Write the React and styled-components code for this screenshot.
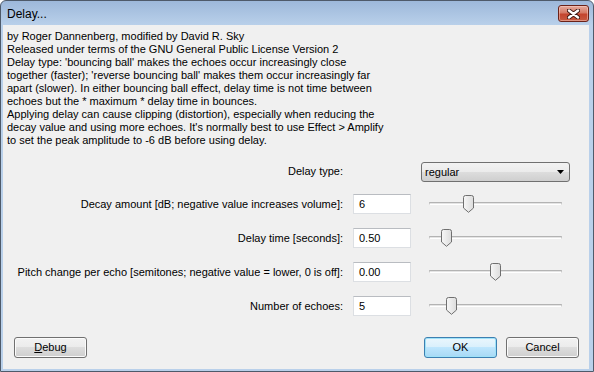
import React from "react";
import styled, { createGlobalStyle } from "styled-components";

const GlobalStyle = createGlobalStyle`
  html, body {
    margin: 0;
    padding: 0;
    background: #ffffff;
    overflow: hidden;
  }
  * {
    box-sizing: border-box;
  }
`;

const description = [
  "by Roger Dannenberg, modified by David R. Sky",
  "Released under terms of the GNU General Public License Version 2",
  "Delay type: 'bouncing ball' makes the echoes occur increasingly close",
  "together (faster); 'reverse bouncing ball' makes them occur increasingly far",
  "apart (slower). In either bouncing ball effect, delay time is not time between",
  "echoes but the * maximum * delay time in bounces.",
  "Applying delay can cause clipping (distortion), especially when reducing the",
  "decay value and using more echoes. It's normally best to use Effect > Amplify",
  "to set the peak amplitude to -6 dB before using delay.",
];

const params = [
  { label: "Decay amount [dB; negative value increases volume]:", value: "6", pos: 0.274 },
  { label: "Delay time [seconds]:", value: "0.50", pos: 0.1 },
  { label: "Pitch change per echo [semitones; negative value = lower, 0 is off]:", value: "0.00", pos: 0.5 },
  { label: "Number of echoes:", value: "5", pos: 0.138 },
];

const Window = styled.div`
  width: 594px;
  height: 372px;
  display: flex;
  flex-direction: column;
  border: 1px solid #4e5a6a;
  border-radius: 6px 6px 0 0;
  padding: 0 4px 2px 2px;
  background: linear-gradient(to bottom, #9db8da 0, #b9d0ea 24px, #b9d0ea 100%);
  font-family: "Liberation Sans", "DejaVu Sans", sans-serif;
  font-size: 11px;
  color: #000;
`;

const TitleBar = styled.div`
  height: 24px;
  flex: none;
  display: flex;
  align-items: flex-start;
  justify-content: space-between;
  padding: 0 0 0 4px;
`;

const Title = styled.div`
  font-size: 12px;
  line-height: 27px;
  color: #000;
`;

const CloseButton = styled.div`
  width: 31px;
  height: 17px;
  margin-top: 4px;
  border: 1px solid #6b2218;
  border-radius: 3px;
  background: linear-gradient(to bottom, #e6aa9c 0%, #d57a66 45%, #c4452f 55%, #c65a41 100%);
  box-shadow: inset 0 0 0 1px rgba(255, 220, 210, 0.45);
  display: flex;
  align-items: center;
  justify-content: center;
`;

const Client = styled.div`
  flex: 1;
  background: #f0f0f0;
  display: flex;
  flex-direction: column;
`;

const Description = styled.div`
  margin: 5px 0 0 4px;
  line-height: 13px;
  white-space: nowrap;
`;

const Grid = styled.div`
  margin: 15px 19px 0 0;
  display: grid;
  grid-template-columns: 1fr 58px 149px;
  column-gap: 10px;
  row-gap: 14px;
  align-items: center;
`;

const Label = styled.div`
  text-align: right;
  line-height: 13px;
  white-space: nowrap;
`;

const Choice = styled.div`
  grid-column: 3;
  height: 20px;
  margin-bottom: -2px;
  align-self: start;
  border: 1px solid #707070;
  border-radius: 3px;
  background: linear-gradient(to bottom, #f2f2f2 0%, #ebebeb 50%, #dddddd 50%, #cfcfcf 100%);
  display: flex;
  align-items: center;
  justify-content: space-between;
  padding: 0 5px 0 3px;
`;

const TextBox = styled.div`
  height: 20px;
  background: #fff;
  border: 1px solid #dcdfe3;
  border-top-color: #b9bcc1;
  padding-left: 5px;
  line-height: 18px;
`;

const Slider = styled.div`
  position: relative;
  height: 20px;
`;

const Track = styled.div`
  position: absolute;
  left: 8px;
  right: 8px;
  top: 8px;
  height: 3px;
  border-top: 1px solid #b3b3b3;
  background: #e4e4e4;
  border-bottom: 1px solid #ffffff;
  border-left: 1px solid #c8c8c8;
  border-right: 1px solid #c8c8c8;
`;

const Thumb = styled.svg`
  position: absolute;
  top: 1px;
`;

const ButtonBar = styled.div`
  margin: 21px 10px 0 11px;
  display: flex;
  align-items: center;
  gap: 9px;
`;

const Spacer = styled.div`
  flex: 1;
`;

const Button = styled.div`
  width: 73px;
  height: 21px;
  border: 1px solid ${(p) => (p.$default ? "#3c7fb1" : "#707070")};
  border-radius: 3px;
  background: ${(p) =>
    p.$default
      ? "linear-gradient(to bottom, #eaf6fd 0%, #d9f0fc 50%, #bee6fd 50%, #a7d9f5 100%)"
      : "linear-gradient(to bottom, #f2f2f2 0%, #ebebeb 50%, #dddddd 50%, #cfcfcf 100%)"};
  box-shadow: inset 0 0 0 1px ${(p) => (p.$default ? "#9fe2f8" : "#fbfbfb")};
  display: flex;
  align-items: center;
  justify-content: center;
  line-height: 13px;
`;

const Mnemonic = styled.span`
  text-decoration: underline;
`;

function ThumbIcon({ center }) {
  return (
    <Thumb width="11" height="18" viewBox="0 0 11 18" style={{ left: `${center - 5.5}px` }}>
      <defs>
        <linearGradient id="tg" x1="0" y1="0" x2="1" y2="0">
          <stop offset="0" stopColor="#f7f7f7" />
          <stop offset="1" stopColor="#dcdcdc" />
        </linearGradient>
      </defs>
      <path
        d="M0.5 2.5 Q0.5 0.5 2.5 0.5 L8.5 0.5 Q10.5 0.5 10.5 2.5 L10.5 13 L5.5 17.3 L0.5 13 Z"
        fill="url(#tg)"
        stroke="#6f6f6f"
        strokeWidth="1"
      />
    </Thumb>
  );
}

function DelaySlider({ pos }) {
  // thumb centre moves from 13px to ~137px inside the 149px control
  const center = 13.1 + pos * 123.75;
  return (
    <Slider>
      <Track />
      <ThumbIcon center={center} />
    </Slider>
  );
}

export default function App() {
  return (
    <>
      <GlobalStyle />
      <Window>
        <TitleBar>
          <Title>Delay...</Title>
          <CloseButton>
            <svg width="13" height="10" viewBox="0 0 13 10">
              <path d="M2 1.5 L11 8.5 M11 1.5 L2 8.5" stroke="#3a1510" strokeWidth="4.2" strokeLinecap="round" />
              <path d="M2 1.5 L11 8.5 M11 1.5 L2 8.5" stroke="#ffffff" strokeWidth="2.4" strokeLinecap="round" />
            </svg>
          </CloseButton>
        </TitleBar>
        <Client>
          <Description>
            {description.map((line) => (
              <div key={line}>{line}</div>
            ))}
          </Description>
          <Grid>
            <Label>Delay type:</Label>
            <Choice>
              <span>regular</span>
              <svg width="7" height="4" viewBox="0 0 7 4">
                <path d="M0 0 L7 0 L3.5 4 Z" fill="#000" />
              </svg>
            </Choice>
            {params.map((p) => (
              <React.Fragment key={p.label}>
                <Label>{p.label}</Label>
                <TextBox>{p.value}</TextBox>
                <DelaySlider pos={p.pos} />
              </React.Fragment>
            ))}
          </Grid>
          <ButtonBar>
            <Button>
              <span>
                <Mnemonic>D</Mnemonic>ebug
              </span>
            </Button>
            <Spacer />
            <Button $default>OK</Button>
            <Button>Cancel</Button>
          </ButtonBar>
        </Client>
      </Window>
    </>
  );
}
